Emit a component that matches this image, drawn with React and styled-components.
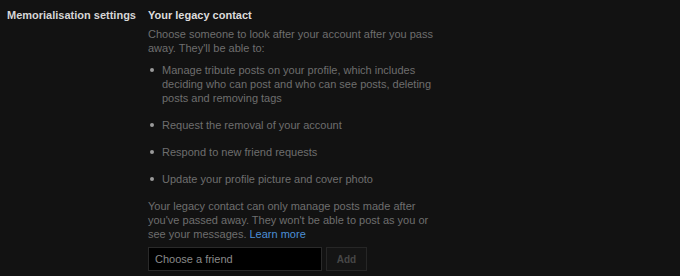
import React from "react";
import styled, { createGlobalStyle } from "styled-components";

const Global = createGlobalStyle`
  html, body { margin: 0; padding: 0; background: #121212; }
  body { font-family: "Liberation Sans", Arial, sans-serif; font-size: 11px; }
`;

const Page = styled.div`
  width: 680px;
  height: 276px;
  background: #121212;
  display: flex;
  padding: 8px 0 0 7px;
  box-sizing: border-box;
  overflow: hidden;
`;

const Label = styled.div`
  width: 141px;
  flex: none;
  font-weight: bold;
  color: #d6d6d6;
  font-size: 11px;
  line-height: 14px;
`;

const Content = styled.div`
  width: 292px;
  display: flex;
  flex-direction: column;
`;

const Title = styled.div`
  font-weight: bold;
  color: #dcdcdc;
  line-height: 14px;
  margin-bottom: 5px;
`;

const Text = styled.p`
  margin: 0;
  color: #6e6e6e;
  line-height: 14px;
`;

const List = styled.ul`
  list-style: none;
  margin: 8px 0 13px;
  padding: 0;
  display: flex;
  flex-direction: column;
  gap: 13px;
`;

const Item = styled.li`
  display: flex;
  color: #6e6e6e;
  line-height: 14px;
  &::before {
    content: "";
    flex: none;
    width: 4px;
    height: 4px;
    border-radius: 50%;
    background: #9a9a9a;
    margin: 5px 8px 0 2px;
  }
`;

const Link = styled.a`
  display: inline-block;
  color: #4c8fd6;
  text-decoration: none;
`;

const Form = styled.div`
  display: flex;
  gap: 4px;
  margin-top: 6px;
`;

const Input = styled.input`
  width: 174px;
  height: 24px;
  box-sizing: border-box;
  background: #000;
  border: 1px solid #2a2a2a;
  color: #888;
  font-family: "Liberation Sans", Arial, sans-serif;
  font-size: 11px;
  padding: 0 6px;
  outline: none;
  &::placeholder { color: #8a8a8a; }
`;

const Button = styled.button`
  width: 41px;
  height: 24px;
  box-sizing: border-box;
  background: #141414;
  border: 1px solid #262626;
  color: #474747;
  font-family: "Liberation Sans", Arial, sans-serif;
  font-weight: bold;
  font-size: 10px;
  padding: 0;
`;

export default function App() {
  return (
    <>
      <Global />
      <Page>
        <Label>Memorialisation settings</Label>
        <Content>
          <Title>Your legacy contact</Title>
          <Text>
            Choose someone to look after your account after you pass away.
            They'll be able to:
          </Text>
          <List>
            <Item>
              Manage tribute posts on your profile, which includes deciding who
              can post and who can see posts, deleting posts and removing tags
            </Item>
            <Item>Request the removal of your account</Item>
            <Item>Respond to new friend requests</Item>
            <Item>Update your profile picture and cover photo</Item>
          </List>
          <Text>
            Your legacy contact can only manage posts made after you've passed
            away. They won't be able to post as you or see your messages.{" "}
            <Link href="#">Learn more</Link>
          </Text>
          <Form>
            <Input placeholder="Choose a friend" />
            <Button>Add</Button>
          </Form>
        </Content>
      </Page>
    </>
  );
}
